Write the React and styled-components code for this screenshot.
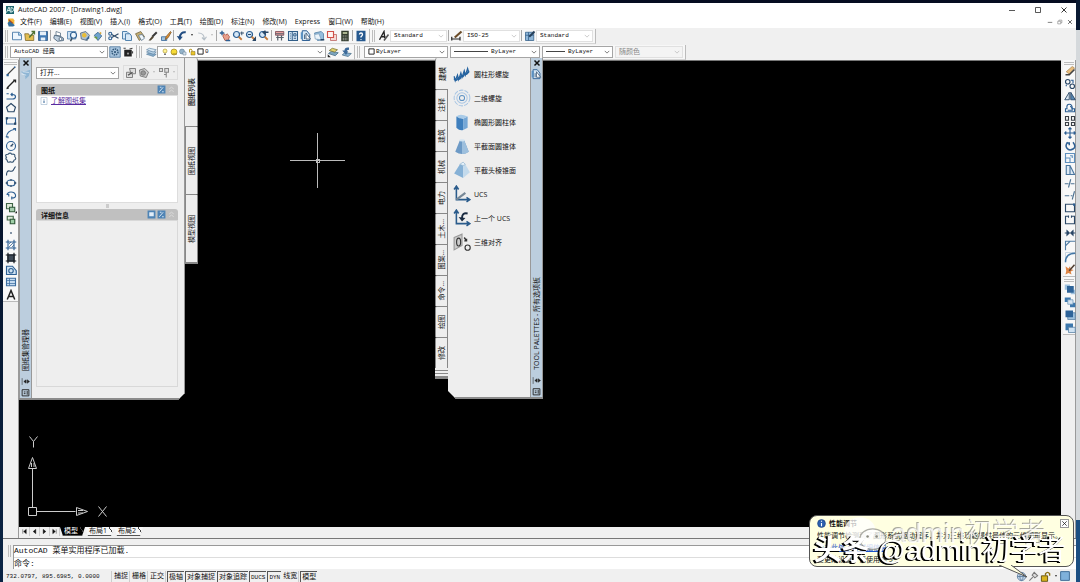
import React from "react";
import styled, { createGlobalStyle, css } from "styled-components";

const UI_FONT = `"Open Sans", "Noto Sans CJK SC", sans-serif`;
const MONO_FONT = `"Liberation Mono", "Noto Sans CJK SC", monospace`;

const GlobalStyle = createGlobalStyle`
  * {
    box-sizing: border-box;
  }

  body {
    margin: 0;
    background: #071527;
    font-family: ${UI_FONT};
    font-size: 7px;
    color: #111;
  }

  button, select, input {
    font: inherit;
    color: inherit;
    margin: 0;
    padding: 0;
    border: 0;
    border-radius: 0;
    background: none;
    outline: none;
  }
`;

const blue = "#2d5f93";
const navy = "#2a4766";
const line = { fill: "none", stroke: navy, strokeWidth: 1.5 };

const page = (
  <path d="M2 3h9l3 3v7H2z" fill="#eef6fd" stroke="#4a7ba8" strokeWidth="1.2" />
);
const zoomGlass = (
  <g>
    <circle cx="6" cy="6" r="4" fill="#d5e7f6" stroke={blue} strokeWidth="1.6" />
    <path d="M9 9l4 4" stroke="#c47a3c" strokeWidth="2.4" />
  </g>
);

// every drawing lives on a 16x16 grid
const glyphs = {
  app: (
    <g>
      <path d="M0 0h16v16H0z" fill="#1f6670" />
      <path d="M1 13L6 2l3 11M3 9h5M10 3v9h2q3-1 3-5t-5-4" fill="none" stroke="#dff3f2" strokeWidth="1.8" />
    </g>
  ),
  doc: (
    <g>
      <path d="M2 1h9l2 3v7H2z" fill="#f5b63a" />
      <path d="M1 9l4-4 9 8-3 2H3z" fill="#356f9c" />
      <path d="M3 3l7 6" stroke="#a33f24" strokeWidth="2" />
    </g>
  ),
  new: (
    <g>
      {page}
      <path d="M10 3v4h4" fill="#9fc6e6" stroke="#4a7ba8" />
    </g>
  ),
  open: (
    <g>
      <path d="M1 5h5l1 2h6v7H2z" fill="#e3bd50" stroke="#7c6425" />
      <path d="M7 10l7-8M10 2h4v4" fill="none" stroke="#4f7131" strokeWidth="1.7" />
    </g>
  ),
  save: (
    <g>
      <path d="M2 2h12v12H2z" fill="#3f79b4" stroke="#27527f" />
      <path d="M4 2h8v5H4zM5 10h6v4H5z" fill="#e6f0f9" />
    </g>
  ),
  print: (
    <g>
      <path d="M4 2l6 2v4L4 7z" fill="#fff" stroke="#536b80" />
      <path d="M2 7l9 2 3 2v3l-8 1-5-4z" fill="#bfd0df" stroke="#39536b" />
      <circle cx="10" cy="12" r="2" fill="#fff" stroke="#39536b" />
    </g>
  ),
  preview: (
    <g>
      <path d="M2 2h11v10H2z" fill="#cce1f3" stroke="#477aa7" />
      <circle cx="10" cy="7" r="4" fill="#edf6fc" stroke={blue} strokeWidth="1.5" />
      <path d="M8 11l-2 4" stroke="#3b4c5b" strokeWidth="2" />
    </g>
  ),
  publish: (
    <g>
      <path d="M2 4l7-2 5 5-3 7-8-2z" fill="#aebfce" stroke="#4a5d6e" />
      <circle cx="7" cy="7" r="3" fill="#e8bd37" />
      <path d="M8 14l5-6 1 3z" fill={blue} />
    </g>
  ),
  dwf: (
    <g>
      <path d="M3 7l5-4 5 5-5 6z" fill="#6ea3ce" stroke="#315e85" />
      <path d="M2 9h5v4z" fill="#6b9b44" />
      <path d="M10 2l3 2-2 2z" fill="#d7a333" />
    </g>
  ),
  cut: (
    <g {...line}>
      <path d="M5 6l9 5M5 10l9-5" />
      <circle cx="3" cy="5" r="2" stroke={blue} />
      <circle cx="3" cy="11" r="2" stroke={blue} />
    </g>
  ),
  copy: (
    <g fill="#d8e9f7" stroke="#4276a5" strokeWidth="1.2">
      <path d="M2 2h6l3 3v7H2z" />
      <path d="M6 5h6l2 3v6H6z" />
    </g>
  ),
  paste: (
    <g>
      <path d="M2 5l7-3 5 7-7 5z" fill="#c6ae72" stroke="#6f613f" />
      <path d="M6 7l5-1 3 5-4 3z" fill="#eff5fa" stroke="#536f88" />
    </g>
  ),
  brush: (
    <g>
      <path d="M13 3L7 9" stroke="#3a3a3a" strokeWidth="2.6" />
      <path d="M7 8l2 2-4 4H2z" fill="#504633" />
    </g>
  ),
  block: (
    <g>
      <path d="M2 9h7v5H2z" fill="#9fc3e1" stroke={blue} />
      <path d="M14 2L8 9l-1 4 4-3 4-7z" fill="#e6912d" stroke="#70512c" />
    </g>
  ),
  undo: (
    <g>
      <path d="M13 3Q6 2 5 10" fill="none" stroke="#204c81" strokeWidth="2.6" />
      <path d="M1 8l4 6 4-5z" fill="#204c81" />
    </g>
  ),
  redo: <path d="M3 4q8 0 8 8M8 10l3 3 3-4" fill="none" stroke="#b6bfc7" strokeWidth="1.6" />,
  pan: (
    <g>
      <path d="M5 8l2-3 2 2 2-2 3 4-2 5H8z" fill="#e9a18d" stroke="#a4493b" />
      <path d="M1 4h6M4 1v6M9 14h6" stroke={blue} strokeWidth="1.8" />
    </g>
  ),
  zoom: (
    <g>
      {zoomGlass}
      <path d="M11 4h5M13 2v5" stroke={navy} strokeWidth="1.2" />
    </g>
  ),
  zoomWindow: (
    <g>
      {zoomGlass}
      <path d="M4 6h4M14 14v-4l-3 4z" stroke={navy} strokeWidth="1.4" />
    </g>
  ),
  zoomPrev: (
    <g>
      {zoomGlass}
      <path d="M14 3H8M10 1L7 3l3 3" fill="none" stroke={navy} strokeWidth="2" />
    </g>
  ),
  properties: (
    <g>
      <path d="M2 2h11v5H2z" fill="#e8a0a0" stroke="#703f49" />
      <path d="M5 7v7M10 7v7M3 10h10M2 5h11" stroke="#58616b" strokeWidth="1.6" />
    </g>
  ),
  center: (
    <g>
      <path d="M2 2h12v12H2z" fill="#cfe2f2" stroke="#315e88" strokeWidth="1.4" />
      <path d="M7 2v12M4 5h1M4 8h1M4 11h1M9 5h3v3H9zM9 11h3" fill="none" stroke="#315e88" strokeWidth="1.3" />
    </g>
  ),
  palette: (
    <g>
      <path d="M3 1h6l4 5v8H3z" fill="#d6e7f5" stroke={blue} strokeWidth="1.3" />
      <path d="M1 3h3v9H1z" fill="#5b91c1" />
      <path d="M8 4v8h6zM6 6v6" fill="#fff" stroke={navy} />
    </g>
  ),
  sheets: (
    <g>
      <path d="M2 4l9-2 3 3v8l-8 1z" fill="#96bddc" stroke="#49789f" />
      <path d="M2 6l6-1 3 8-8-1z" fill="#eaf3fa" stroke="#7fa1bd" />
      <path d="M10 13h5" stroke={navy} strokeWidth="2" />
    </g>
  ),
  markup: (
    <g>
      <path d="M6 6h8v8H6z" fill="#f5d9d5" stroke="#b85e5a" />
      <path d="M2 2h8v8H2z" fill="#fff5f2" stroke="#d05048" strokeWidth="1.5" />
    </g>
  ),
  calc: (
    <g>
      <path d="M3 1h10v14H3z" fill="#333c2e" />
      <path d="M5 3h6v2H5z" fill="#d6dfb4" />
      <path d="M5 8h6M5 11h6M5 13h6" stroke="#d9d9d9" strokeDasharray="1.5 1" />
    </g>
  ),
  help: (
    <g>
      <path d="M2 1h12v14H2z" fill="#26598f" />
      <path d="M6 6q0-2 2-2t2 2q0 1-2 3v1M8 12v1" fill="none" stroke="#fff" strokeWidth="1.8" />
    </g>
  ),
  textStyle: (
    <g>
      <path d="M2 13L8 2l1 9M4 9h6" fill="none" stroke="#222" strokeWidth="1.8" />
      <path d="M8 14l6-8" stroke="#555" strokeWidth="2" />
    </g>
  ),
  dimStyle: (
    <g>
      <path d="M1 12h11M1 9v5M12 9v5" stroke="#222" strokeWidth="1.6" />
      <path d="M14 2L5 10" stroke="#6b4c28" strokeWidth="3" />
    </g>
  ),
  tableStyle: (
    <g>
      <path d="M2 3h11v11H2z" fill="#8fb6d8" stroke="#315e88" />
      <path d="M2 7h11M6 3v11" stroke="#315e88" />
      <path d="M14 2L7 9" stroke="#253e58" strokeWidth="2.4" />
    </g>
  ),
  gear: (
    <g>
      <path d="M1 1h14v14H1z" fill="#a9c5de" stroke="#436d94" />
      <circle cx="8" cy="8" r="4" fill="none" stroke="#345a7d" strokeWidth="2" strokeDasharray="2 1" />
      <circle cx="8" cy="8" r="1.5" fill="#345a7d" />
    </g>
  ),
  lock: (
    <g>
      <path d="M3 5h10v9H3z" fill="#222" />
      <circle cx="8" cy="10" r="1.5" fill="#999" />
      <path d="M2 3h3M10 4l4-1M14 7v3" stroke="#444" strokeWidth="1.6" />
    </g>
  ),
  layers: (
    <g stroke="#52799b" strokeWidth=".8">
      <path d="M2 11l4-2 9 2-4 3z" fill="#85abc9" />
      <path d="M2 8l4-2 9 2-4 3z" fill="#b9d3e7" />
      <path d="M2 5l4-2 9 2-4 3z" fill="#dceaf5" />
    </g>
  ),
  bulb: (
    <g>
      <circle cx="8" cy="6" r="4" fill="#fff397" stroke="#a58e23" strokeWidth="1.2" />
      <path d="M6 11h4v3H6z" fill="#777" />
    </g>
  ),
  sun: (
    <g>
      <circle cx="8" cy="8" r="6" fill="#f7dc36" stroke="#a58e23" strokeWidth="1.5" />
      <path d="M5 12h9" stroke="#9d842e" strokeWidth="2" />
    </g>
  ),
  freeze: (
    <g>
      <circle cx="6" cy="7" r="5" fill="#94b3ca" stroke="#54748b" />
      <path d="M8 8h6v6H8z" fill="#d6e4ee" stroke="#60798c" />
    </g>
  ),
  unlock: (
    <g>
      <path d="M6 7h8v7H6z" fill="#e9c52d" stroke="#81691c" />
      <path d="M8 7V4Q7 1 3 3v6" fill="none" stroke="#b89827" strokeWidth="2" />
    </g>
  ),
  swatch: <path d="M2 2h12v12H2z" fill="#fff" stroke="#111" strokeWidth="2" />,
  layerPrev: (
    <g>
      <path d="M2 10l4-3 9 2-4 4z" fill="#7ca4bd" stroke="#466c86" />
      <path d="M3 6l4-3 7 2-4 3z" fill="#e2d36f" stroke="#7a7230" />
      <path d="M1 11v4h4z" fill="#222" />
    </g>
  ),
  layerState: (
    <g>
      <path d="M3 12l3-3 9 1-4 4z" fill="#8cb3d3" stroke="#466c86" />
      <path d="M12 2Q6 1 6 6H3l5 6 3-5H9q0-2 3-2z" fill="#3b6999" />
    </g>
  ),
  lineTool: (
    <g>
      <path d="M3 13L13 3" stroke="#444" strokeWidth="1.5" />
      <path d="M2 12h3v3H2zM12 2h2v2h-2z" fill={blue} />
    </g>
  ),
  ray: <path d="M3 13L13 3M2 14l3-1M11 3h3v3" fill="none" stroke="#222" strokeWidth="1.8" />,
  pline: <path d="M2 5h3M2 12h8q4 0 4-3t-4-3H8M10 4L8 6l2 2" {...line} stroke={blue} />,
  polygon: <path d="M8 2l6 5-2 6H4L2 7z" {...line} />,
  rect: (
    <g>
      <path d="M2 4h12v8H2z" {...line} stroke={blue} />
      <path d="M1 3h3v3H1zM12 10h3v3h-3z" fill={navy} />
    </g>
  ),
  arc: <path d="M2 14Q2 5 13 3M1 13h3v2M11 2h3v3" {...line} stroke={blue} />,
  circle: (
    <g {...line} stroke={blue}>
      <circle cx="8" cy="8" r="6" />
      <path d="M8 8l3-3M7 8h3" stroke={navy} />
    </g>
  ),
  cloud: (
    <path d="M4 3q3-3 5 0 5-1 4 3 3 4-1 5-1 4-5 2-4 2-4-2-3-2-1-4-3-4 2-4z" {...line} stroke="#3c5975" />
  ),
  spline: <path d="M2 14q0-7 4-6t5-1 3-5" {...line} />,
  ellipse: (
    <g>
      <ellipse cx="8" cy="8" rx="5.5" ry="4" {...line} stroke={blue} />
      <path d="M7 3h2v2H7zM1 7h3v2H1zM12 7h3v2h-3zM7 11h2v2H7z" fill={navy} />
    </g>
  ),
  ellipseArc: <path d="M3 8q0-4 5-4t6 4-5 4M9 10v4M2 7h3v3" {...line} stroke={blue} />,
  insert: (
    <g>
      <path d="M2 2h8v7H2z" fill="#dfead9" stroke="#3e6445" strokeWidth="1.5" />
      <path d="M6 7h7v6H6z" fill="#a8ceb0" stroke="#2f5838" strokeWidth="1.4" />
      <path d="M13 15h3v-3z" fill="#222" />
    </g>
  ),
  makeBlock: (
    <g>
      <path d="M3 3h8v5H3z" fill="#dfead9" stroke="#3e6445" strokeWidth="1.5" />
      <path d="M7 7h6v6H7z" fill="#9fcfa7" stroke="#2f5838" strokeWidth="1.5" />
    </g>
  ),
  point: <path d="M7 7h2v2H7z" fill={navy} />,
  hatch: (
    <g {...line} stroke={blue}>
      <path d="M4 1v14M12 1v14M1 4h14M1 12h14" />
      <path d="M5 11l6-6M5 7l3-3M9 11l3-3" strokeWidth="1" />
    </g>
  ),
  gradient: (
    <g>
      <path d="M3 3h10v10H3z" fill="#3f4b58" />
      <path d="M4 1v14M12 1v14M1 4h14M1 12h14" stroke="#161b21" strokeWidth="1.6" />
    </g>
  ),
  region: (
    <g {...line} stroke={blue} fill="#cfe2f2">
      <path d="M2 3h8l5 6v5H2z" />
      <circle cx="8" cy="9" r="3" />
    </g>
  ),
  table: (
    <g>
      <path d="M2 3h12v10H2z" fill="#c5dbf0" stroke="#3c6da0" strokeWidth="1.5" />
      <path d="M2 6h12M2 10h12M6 3v10" stroke="#3c6da0" />
    </g>
  ),
  mtext: <path d="M3 14L8 2l5 12M5 10h6" fill="none" stroke="#222" strokeWidth="2" />,
  erase: (
    <g>
      <path d="M3 9l8-7 3 2-7 8z" fill="#e9bd7d" stroke="#a98650" />
      <path d="M2 13h5l7-7" fill="none" stroke="#444" strokeWidth="2" />
    </g>
  ),
  copyObj: (
    <g {...line}>
      <circle cx="5" cy="5" r="3" />
      <circle cx="11" cy="11" r="3" />
      <path d="M9 3h3v4M3 9v2" stroke={blue} />
    </g>
  ),
  mirror: (
    <g>
      <path d="M7 3v10H1z" fill="#dbe6f0" stroke={navy} strokeWidth="1.2" />
      <path d="M9 3v10h6z" fill="#5786b1" stroke={navy} strokeWidth="1.2" />
    </g>
  ),
  offset: (
    <g {...line} stroke={blue}>
      <path d="M2 13h12V9h-3q0-6-4-6T4 9H2z" />
      <path d="M5 11h6q0-5-3-5" />
    </g>
  ),
  array: <path d="M2 2h4v5H2zM10 2h4v5h-4zM2 10h4v4H2zM10 10h4v4h-4z" {...line} stroke="#3a3f46" />,
  move: <path d="M8 1v14M1 8h14M6 3l2-2 2 2M6 13l2 2 2-2M3 6L1 8l2 2M13 6l2 2-2 2" {...line} stroke={blue} />,
  rotate: <path d="M5 3Q1 7 4 11t8 1 0-9M3 4h4v3" {...line} stroke={blue} strokeWidth="2" />,
  scale: (
    <g {...line} stroke="#5f90bd">
      <path d="M2 2h12v12H2z" />
      <path d="M2 8h6v6H2zM8 5h3v3" />
    </g>
  ),
  stretch: <path d="M3 2v12h11L8 2zM8 2v12" {...line} fill="#dfeaf4" stroke="#49769f" />,
  trim: <path d="M1 9h5M9 9h5M9 3L6 14" {...line} stroke="#4c7292" />,
  extend: <path d="M1 9h6M9 9h2M14 3l-3 11" {...line} stroke="#4c7292" />,
  breakPoint: (
    <g>
      <path d="M2 3h12v10H2z" {...line} />
      <path d="M12 2h3v3h-3z" fill={blue} />
    </g>
  ),
  breakTool: <path d="M6 3H2v10h12V3h-4M6 2v3M10 2v3" {...line} />,
  join: <path d="M1 8h5M15 8h-5M4 5l3 3-3 3zM12 5L9 8l3 3z" {...line} fill={navy} />,
  chamfer: <path d="M2 15V9l6-6h7M2 9V3h6" {...line} stroke="#4f7ba3" />,
  fillet: (
    <g fill="none">
      <path d="M2 15V2h13" stroke="#b8c9d8" />
      <path d="M2 15Q2 3 15 3" stroke="#4276a5" strokeWidth="2" />
    </g>
  ),
  explode: (
    <g>
      <path d="M2 3l4 3 2-3 1 4 4 1-4 2 1 4-4-2-4 2 1-5z" fill="#df8545" />
      <path d="M14 1L7 9" stroke="#513f32" strokeWidth="2" />
    </g>
  ),
  orderFront: (
    <g>
      <path d="M1 2h7v7H1zM9 9h6v6H9z" fill="#9fc1dd" />
      <path d="M4 4h9v9H4z" fill="#2f6499" />
    </g>
  ),
  orderBack: (
    <g>
      <path d="M1 2h8v6H1zM8 9h7v6H8z" fill="#3d78ad" />
      <path d="M5 5h7v6H5z" fill="#d8e6f2" stroke="#6c95b8" />
    </g>
  ),
  orderAbove: (
    <g>
      <path d="M5 5h10v9H5z" fill="#9fc1dd" stroke="#567fa3" />
      <path d="M2 2h10v9H2z" fill="#2f6499" />
    </g>
  ),
  orderUnder: (
    <g>
      <path d="M2 2h10v9H2z" fill="#3d78ad" />
      <path d="M6 7h9v7H6z" fill="#cfe2f2" stroke="#567fa3" />
    </g>
  ),
  helix: (
    <g fill="none" stroke="#2563a0" strokeWidth="1.1">
      <path d="M1 10l1 4 2-5 1 4 2-6 1 4 2-6 1 4 2-6 1 4" />
      <path d="M1 12q2 3 3 0M4 11q2 3 3-1M7 9q2 3 3-1M10 7q2 3 4-2" strokeWidth="1.6" />
    </g>
  ),
  spiral: (
    <g fill="none" stroke="#a9c6e4" strokeWidth=".9">
      <circle cx="8" cy="8" r="7" strokeDasharray="4 1" />
      <circle cx="8" cy="8" r="4.6" />
      <circle cx="8" cy="8" r="2.3" stroke="#5f93c5" />
    </g>
  ),
  cylinder: (
    <g>
      <path d="M3 3v10q3 3 6 2V5z" fill="#3f7fbd" />
      <path d="M9 5v10l4-2V3z" fill="#75a7d6" />
      <path d="M3 3q3-3 10 0l-4 2q-4 0-6-2z" fill="#a9cbe8" />
    </g>
  ),
  cone: (
    <g>
      <path d="M6 3L2 13q6 4 12 0L10 3z" fill="#6d9ac6" />
      <path d="M8 3v12q4 0 6-2L10 3z" fill="#9dbfdd" />
      <ellipse cx="8" cy="3" rx="2.5" ry="1" fill="#d2e4f2" />
    </g>
  ),
  pyramid: (
    <g>
      <path d="M6 3L1 11l8 4V4z" fill="#86b1d6" />
      <path d="M9 4v11l6-5-4-7z" fill="#c3daec" />
      <path d="M6 3l3-2 2 2-2 1z" fill="#e8f3fb" stroke="#7ba5c8" strokeWidth=".5" />
    </g>
  ),
  ucs: (
    <g fill="none" stroke="#2b5c8c" strokeWidth="1.4">
      <path d="M3 1v12h12M1 4l2-3 2 3M12 11l3 2-3 2" />
      <path d="M3 13l8-6" stroke="#778897" strokeWidth="2" />
    </g>
  ),
  ucsPrev: (
    <g>
      <path d="M3 1v12h12M1 4l2-3 2 3M12 11l3 2-3 2" fill="none" stroke="#2b5c8c" strokeWidth="1.4" />
      <path d="M13 4Q8 3 8 8" fill="none" stroke="#182940" strokeWidth="1.7" />
      <path d="M5 7l3 4 3-3z" fill="#182940" />
    </g>
  ),
  align3d: (
    <g fill="none" stroke="#333">
      <path d="M1 4l7-3v10l-7 4z" fill="#ccc" stroke="#999" />
      <ellipse cx="5" cy="8" rx="1.800" ry="3.500" />
      <circle cx="13" cy="13" r="2.3" />
      <path d="M10 4l2 3M10 7h2V5" strokeWidth="1.300" />
    </g>
  ),
  wing: (
    <g>
      <path d="M1 4q8 0 14-3l-2 9q-4 3-5 5 0-8-7-11z" fill="#8eb5d4" />
      <path d="M2 7l7 2M4 4l9 1" stroke="#eaf3fa" />
    </g>
  ),
  autoHide: <path d="M2 2v12M9 5L5 8l4 3zM11 5l4 3-4 3z" fill="#222" stroke="#222" />,
  menuBox: (
    <g fill="none" stroke="#222" strokeWidth="1.6">
      <path d="M2 3h12v11H2z" />
      <path d="M5 7h3M5 10h3M11 5v7" />
    </g>
  ),
  close: <path d="M3 3l10 10M13 3L3 13" stroke="#111" strokeWidth="3" />,
  boxIcon: (
    <g>
      <path d="M1 1h14v14H1z" fill="#4f84b5" />
      <path d="M4 4h8v7H4z" fill="#e3eef8" />
    </g>
  ),
  boxCheck: (
    <g>
      <path d="M1 1h14v14H1z" fill="#4f84b5" />
      <path d="M4 12l7-8M5 4h3M9 12h3" stroke="#e3eef8" strokeWidth="1.6" />
    </g>
  ),
  chevrons: <path d="M4 7l4-3 4 3M4 12l4-3 4 3" fill="none" stroke="#dcdcdc" strokeWidth="1.6" />,
  infoPage: (
    <g>
      <path d="M2 1h12v14H2z" fill="#fff" stroke="#8aa7c0" />
      <path d="M8 4v1M8 7v5" stroke={blue} strokeWidth="2" />
    </g>
  ),
  info: (
    <g>
      <circle cx="8" cy="8" r="7" fill="#2b5fb0" stroke="#173b78" />
      <path d="M8 3v2M8 7v6" stroke="#fff" strokeWidth="2" />
    </g>
  ),
  sheetGray: (
    <g fill="#ddd" stroke="#777" strokeWidth="1.2">
      <path d="M2 7h8v7H2z" />
      <path d="M6 2h8v7H8z" />
      <path d="M4 11l6-4" stroke="#555" strokeWidth="2" />
    </g>
  ),
  publishGray: (
    <g fill="#ccc" stroke="#777" strokeWidth="1.2">
      <path d="M2 4l7-2 5 5-3 7-8-2z" />
      <circle cx="7" cy="8" r="3" fill="#999" />
    </g>
  ),
  treeGray: <path d="M2 2h4v4H2zM9 2h5v5H9zM11 7v7M8 10h3" fill="#ddd" stroke="#888" strokeWidth="1.4" />,
  min: <path d="M2 9h12" stroke="#222" strokeWidth="1.5" />,
  max: <path d="M3 3h10v10H3z" fill="none" stroke="#222" strokeWidth="1.5" />,
  restore: <path d="M2 6h8v7H2zM5 6V3h8v7h-3" fill="none" stroke="#777" strokeWidth="1.5" />,
  quit: <path d="M3 3l10 10M13 3L3 13" stroke="#222" strokeWidth="1.8" />,
  globe: (
    <g fill="#c7d8ea" stroke="#56799b" strokeWidth="1.2">
      <circle cx="8" cy="8" r="6" />
      <path d="M2 8h12M8 2q-5 6 0 12M8 2q5 6 0 12" fill="none" />
    </g>
  ),
  plug: <path d="M2 14l5-5M6 6l4 4 4-3-5-5z" fill="#ddd" stroke="#777" strokeWidth="1.5" />,
  goldLock: (
    <g>
      <path d="M2 7h9v8H2z" fill="#d8b31e" stroke="#5f4c0b" strokeWidth="1.3" />
      <path d="M8 7V4q3-4 6 0v3" fill="none" stroke="#8b7015" strokeWidth="2" />
    </g>
  ),
  tray: <path d="M1 1h14v14H1z" fill="#7fb1db" stroke="#426f98" strokeWidth="1.6" />,
};

const Glyph = styled.svg`
  display: block;
  flex: none;
  width: ${(p) => p.$size || 12}px;
  height: ${(p) => p.$size || 12}px;
`;

const Icon = ({ name, size }) => (
  <Glyph viewBox="0 0 16 16" $size={size} aria-hidden="true">
    {glyphs[name]}
  </Glyph>
);

const Desktop = styled.div`
  min-height: 100vh;
  display: flex;
  padding: 3px 4px 0 3px;
  background: linear-gradient(#0a1a33 30px, #d5d9dc 30px, #d5d9dc 520px, #1c4f82 520px) right / 4px 100% no-repeat,
    linear-gradient(#050c20, #0a2444);
`;

const Window = styled.div`
  flex: 1;
  min-width: 0;
  display: flex;
  flex-direction: column;
  background: #f0f0f0;
`;

const TitleBar = styled.header`
  display: flex;
  align-items: center;
  gap: 4px;
  height: 13px;
  padding: 0 8px 0 3px;
  background: #fff;
`;

const Title = styled.h1`
  flex: 1;
  margin: 0;
  font-size: 7px;
  font-weight: 400;
`;

const WindowControls = styled.div`
  display: flex;
  gap: ${(p) => (p.$small ? 4 : 18)}px;
`;

const PlainButton = styled.button`
  display: grid;
  place-items: center;
`;

const MenuBar = styled.nav`
  display: flex;
  align-items: center;
  height: 12px;
  padding: 0 3px 0 4px;
  background: #fff;
`;

const MenuList = styled.div`
  flex: 1;
  display: flex;
  gap: 8px;
  margin-left: 4px;
`;

const MenuItem = styled.button`
  line-height: 10px;
  white-space: nowrap;
`;

const ToolbarRow = styled.div`
  display: flex;
  align-items: center;
  height: 16px;
`;

const Toolbar = styled.div`
  display: flex;
  align-items: center;
  height: 15px;
  padding: 0 2px;
  gap: ${(p) => p.$gap || 0}px;
  background: #f7f7f7;
  border-right: 1px solid #bbb;
  border-bottom: 1px solid #d5d5d5;
`;

const ToolButton = styled.button`
  display: grid;
  place-items: center;
  width: 13px;
  height: 13px;
`;

const DropButton = styled.button`
  display: grid;
  place-items: center;
  width: 7px;
  height: 12px;

  &::before {
    content: "";
    border: 1px solid transparent;
    border-top: 2px solid ${(p) => (p.$dim ? "#bbb" : "#333")};
  }
`;

const Separator = styled.span`
  width: 1px;
  height: 11px;
  margin: 0 1px;
  background: #a8a8a8;
`;

const Grip = styled.span`
  flex: none;
  border: 0 solid #bdbdbd;
  ${(p) =>
    p.$across
      ? css`
          height: 3px;
          margin: 0 1px;
          border-width: 1px 0;
        `
      : css`
          width: 3px;
          height: 12px;
          margin-right: 2px;
          border-width: 0 1px;
        `}
`;

const ComboFrame = styled.label`
  display: flex;
  align-items: center;
  gap: 1px;
  width: ${(p) => p.$width}px;
  height: 12px;
  padding: 0 2px 0 3px;
  background: ${(p) => (p.$dim ? "#f4f4f4" : "#fff")};
  border: 1px solid ${(p) => (p.$soft ? "#e0e0e0" : "#a5a5a5")};
  color: ${(p) => (p.$dim ? "#888" : "#111")};
  font-family: ${(p) => (p.$ui ? UI_FONT : MONO_FONT)};
  font-size: ${(p) => (p.$ui ? 7 : 6)}px;

  select {
    flex: 1;
    min-width: 0;
    height: 10px;
    appearance: none;
    opacity: 1;
  }
`;

const LineSample = styled.span`
  width: ${(p) => p.$width}px;
  height: 1px;
  margin-right: 2px;
  background: #444;
`;

const Combo = ({ label, value, children, ...rest }) => (
  <ComboFrame {...rest}>
    {children}
    <select aria-label={label} disabled={rest.$dim}>
      <option>{value}</option>
    </select>
    <Glyph viewBox="0 0 16 16" $size={6} aria-hidden="true">
      <path d="M2 5l6 6 6-6" fill="none" stroke={rest.$soft ? "#bbb" : "#555"} strokeWidth="2" />
    </Glyph>
  </ComboFrame>
);

const Workspace = styled.main`
  flex: 1;
  display: flex;
`;

const SideBar = styled.aside`
  width: ${(p) => (p.$right ? 15 : 16)}px;
  flex: none;
  padding-left: ${(p) => (p.$right ? 2 : 0)}px;
  border-right: 1px solid #9a9a9a;
`;

const SideTools = styled.div`
  display: flex;
  flex-direction: column;
  padding-top: 2px;
  background: #f8f8f8;
  border-bottom: 1px solid #bbb;
`;

const ToolColumn = styled.div`
  display: grid;
  grid-template-rows: repeat(${(p) => p.$rows}, 1fr);
  height: ${(p) => p.$height}px;
  justify-items: center;
  align-items: center;

  button {
    height: 12px;
  }
`;

const DrawingArea = styled.section`
  flex: 1;
  min-width: 0;
  display: flex;
  flex-direction: column;
`;

const Canvas = styled.div`
  position: relative;
  flex: 1;
  background: #000;
  border-top: 1px solid #777;
`;

const Crosshair = styled.svg`
  position: absolute;
  left: 271px;
  top: 72px;
  width: 55px;
  height: 55px;
`;

const UcsMark = styled.svg`
  position: absolute;
  left: 6px;
  bottom: 5px;
  width: 84px;
  height: 86px;
`;

const FloatingWindow = styled.div`
  position: absolute;
  top: -3px;
  left: ${(p) => p.$left}px;
  display: flex;
  align-items: flex-start;
`;

const PanelBody = styled.div`
  display: flex;
  height: ${(p) => p.$height}px;
  background: #eee;
  border-bottom: 2px solid #8b8b8b;
  clip-path: ${(p) =>
    p.$cut === "right"
      ? "polygon(0 0, 100% 0, 100% calc(100% - 7px), calc(100% - 7px) 100%, 0 100%)"
      : "polygon(0 0, 100% 0, 100% 100%, 8px 100%, 0 calc(100% - 8px))"};
`;

const CaptionBar = styled.div`
  display: flex;
  flex-direction: column;
  align-items: center;
  gap: 2px;
  width: 13px;
  padding: 1px 0 1px;
  background: #bccede;
  border: 0 solid #999;
  border-width: 0 1px;
`;

const SidewaysText = styled.span`
  writing-mode: vertical-rl;
  text-orientation: sideways;
  transform: rotate(180deg);
  line-height: 9px;
  white-space: nowrap;
`;

const CaptionTitle = styled(SidewaysText)`
  margin-top: auto;
  margin-bottom: 4px;
`;

const SheetContent = styled.div`
  display: flex;
  flex-direction: column;
  width: 153px;
  padding: 7px 6px 11px 4px;
  border-right: 1px solid #999;
`;

const SheetTools = styled.div`
  display: flex;
  align-items: center;
  gap: 4px;
  margin-bottom: 4px;
`;

const SheetButtons = styled.div`
  display: flex;
  flex: 1;
  border: 1px solid #ddd;
`;

const SectionHeader = styled.h2`
  display: flex;
  align-items: center;
  gap: 1px;
  height: 11px;
  margin: 0;
  padding: 0 2px 0 5px;
  background: #c0c0c0;
  border-radius: 3px 3px 0 0;
  font-size: 7px;
  font-weight: 700;

  span {
    flex: 1;
  }
`;

const SheetList = styled.div`
  height: 108px;
  padding: 0 3px;
  background: #fff;
  border: 1px solid #ddd;
`;

const SheetLink = styled.a`
  display: flex;
  align-items: center;
  gap: 3px;
  line-height: 9px;
  color: #5a2ca0;
`;

const Splitter = styled.div`
  width: 3px;
  height: 4px;
  margin: 1px auto;
  background: #ccc;
`;

const DetailBox = styled.div`
  flex: 1;
  border: 1px solid #d8d8d8;
`;

const TabStrip = styled.div`
  display: flex;
  flex-direction: column;
  width: 13px;
  border-bottom: 2px solid #888;
`;

const SideTab = styled.button`
  display: grid;
  place-items: center;
  width: 13px;
  height: ${(p) => p.$height}px;
  font-weight: ${(p) => (p.$active ? 500 : 400)};
  background: #eee;
  border: 0 solid #888;
  border-top-width: ${(p) => (p.$first ? 0 : 1)}px;
  border-left-width: ${(p) => (p.$side === "right" && p.$active ? 0 : 1)}px;
  border-right-width: ${(p) => (p.$side === "left" && p.$active ? 0 : 1)}px;
  border-radius: ${(p) => (p.$side === "right" ? "0 2px 0 0" : "2px 0 0 0")};
`;

const TabStack = styled.div`
  height: 9px;
  background: repeating-linear-gradient(#eee 0 2px, #888 2px 3px);
`;

const ToolList = styled.ul`
  width: 82px;
  margin: 0;
  padding: 4px 0 0 5px;
  list-style: none;
`;

const ToolEntry = styled.button`
  display: flex;
  align-items: center;
  gap: 3px;
  height: 24px;
  white-space: nowrap;
`;

const LayoutTabs = styled.div`
  display: flex;
  align-items: flex-start;
  height: 11px;
  padding-left: 1px;
`;

const NavButton = styled.button`
  display: grid;
  place-items: center;
  width: 10px;
  height: 9px;
  border-right: 1px solid #ccc;
`;

const LayoutTab = styled.button`
  display: flex;
  gap: 2px;
  height: 9px;
  padding-left: 4px;
  line-height: 8px;
  color: ${(p) => (p.$active ? "#fff" : "#111")};
  background: ${(p) => (p.$active ? "#000" : "#f8f8f8")};
  border-bottom: 1px solid #555;
  clip-path: polygon(0 0, 100% 0, calc(100% - 3px) 100%, 3px 100%);

  &::after {
    content: "";
    width: 5px;
    background: linear-gradient(to bottom right, transparent 46%, #444 46% 56%, transparent 56%);
    transform: scaleX(-1);
  }
`;

const CommandArea = styled.section`
  display: flex;
  height: 32px;
  padding: 6px 0 1px 5px;
  border-top: 1px solid #777;
`;

const CommandLines = styled.div`
  flex: 1;
  background: #fff;
  border: 1px solid #999;
  border-width: 1px 0 0 1px;
  font-family: ${MONO_FONT};
  font-size: 8px;
`;

const CommandHistory = styled.p`
  margin: 0;
  height: 12px;
  line-height: 9px;
  border-bottom: 1px solid #ddd;
`;

const CommandPrompt = styled.label`
  display: flex;
  line-height: 11px;

  input {
    flex: 1;
    height: 10px;
  }
`;

const StatusBar = styled.footer`
  display: flex;
  align-items: center;
  gap: 1px;
  height: 12px;
  padding: 0 6px 0 3px;
`;

const Coordinates = styled.output`
  width: 106px;
  height: 11px;
  line-height: 12px;
  font-family: ${MONO_FONT};
  font-size: 6px;
  white-space: pre;
  border-right: 1px solid #ccc;
`;

const StatusToggle = styled.button`
  height: 11px;
  padding: 0 1px;
  line-height: 11px;
  white-space: nowrap;
  font-family: ${MONO_FONT};
  font-size: ${(p) => (p.$latin ? 6 : 7)}px;
  border: 0 solid #555;
  border-width: ${(p) => (p.$on ? "1px 0 0 1px" : "0 1px 0 0")};
  border-color: ${(p) => (p.$on ? "#555" : "#ccc")};
`;

const Tray = styled.div`
  display: flex;
  align-items: center;
  gap: 1px;
  margin-left: auto;
`;

const Balloon = styled.div`
  position: fixed;
  right: 6px;
  bottom: 15px;
  width: 265px;
  height: 52px;
  padding: 1px 4px 0 7px;
  background: #ffffe1;
  border: 1px solid #555;
  border-radius: 8px;
  line-height: 12px;

  p {
    margin: 0;
    white-space: nowrap;
    overflow: hidden;
  }

  a {
    color: #1a50c8;
  }
`;

const BalloonTitle = styled.div`
  display: flex;
  align-items: center;
  gap: 3px;
  height: 13px;
  font-weight: 700;

  span {
    flex: 1;
  }
`;

const BalloonClose = styled(PlainButton)`
  width: 9px;
  height: 9px;
  background: #fff;
  border: 1px solid #999;
`;

const BalloonTail = styled.svg`
  position: absolute;
  right: 44px;
  top: 49px;
  width: 30px;
  height: 14px;
`;

const Watermark = styled.div`
  position: fixed;
  right: 14px;
  bottom: 13px;
  font-family: "Liberation Sans", "Noto Sans CJK SC", sans-serif;
  font-size: 28px;
  line-height: 36px;
  white-space: nowrap;
  color: #fff;
  text-shadow: -1px 1px 0 #000, -2px 1px 0 #000;
  pointer-events: none;

  b {
    font-weight: 700;
  }
`;

const GhostMark = styled.div`
  position: fixed;
  right: 34px;
  bottom: 30px;
  display: flex;
  align-items: center;
  gap: 3px;
  font-family: "Liberation Sans", "Noto Sans CJK SC", sans-serif;
  font-size: 27px;
  font-weight: 300;
  line-height: 36px;
  white-space: nowrap;
  color: rgba(255, 255, 255, 0.8);
  text-shadow: -1px -1px 0 rgba(110, 110, 110, 0.6);
  pointer-events: none;
`;

const menus = [
  "文件(F)", "编辑(E)", "视图(V)", "插入(I)", "格式(O)", "工具(T)",
  "绘图(D)", "标注(N)", "修改(M)", "Express", "窗口(W)", "帮助(H)",
];

const standardGroups = [
  ["new", "open", "save"],
  ["print", "preview", "publish", "dwf"],
  ["cut", "copy", "paste", "brush", "block"],
  ["undo", "drop", "redo", "dropDim"],
  ["pan", "zoom", "zoomWindow", "zoomPrev"],
  ["properties", "center", "palette", "sheets", "markup", "calc"],
  ["help"],
];

const drawTools = [
  "lineTool", "ray", "pline", "polygon", "rect", "arc", "circle", "cloud", "spline", "ellipse",
  "ellipseArc", "insert", "makeBlock", "point", "hatch", "gradient", "region", "table", "mtext",
];

const modifyTools = [
  "erase", "copyObj", "mirror", "offset", "array", "move", "rotate", "scale", "stretch",
  "trim", "extend", "breakPoint", "breakTool", "join", "chamfer", "fillet", "explode",
];

const orderTools = ["orderFront", "orderBack", "orderAbove", "orderUnder"];

const paletteTabs = ["建模", "注释", "建筑", "机械", "电力", "土木...", "图案...", "命令...", "绘图", "修改"];

const paletteTools = [
  ["helix", "圆柱形螺旋"],
  ["spiral", "二维螺旋"],
  ["cylinder", "椭圆形圆柱体"],
  ["cone", "平截面圆锥体"],
  ["pyramid", "平截头棱锥面"],
  ["ucs", "UCS"],
  ["ucsPrev", "上一个 UCS"],
  ["align3d", "三维对齐"],
];

const toggles = [
  ["捕捉", false], ["栅格", false], ["正交", false], ["极轴", true], ["对象捕捉", true],
  ["对象追踪", true], ["DUCS", true], ["DYN", true], ["线宽", false], ["模型", true],
];

const Tool = ({ name }) => {
  if (name.startsWith("drop")) {
    return <DropButton aria-label={name} $dim={name === "dropDim"} />;
  }
  return (
    <ToolButton aria-label={name}>
      <Icon name={name} />
    </ToolButton>
  );
};

const ToolStack = ({ tools, height }) => (
  <ToolColumn $rows={tools.length} $height={height}>
    {tools.map((name) => (
      <Tool key={name} name={name} />
    ))}
  </ToolColumn>
);

const SheetSetManager = () => (
  <FloatingWindow $left={0}>
    <PanelBody $height={342} $cut="right">
      <CaptionBar>
        <PlainButton aria-label="关闭">
          <Icon name="close" size={8} />
        </PlainButton>
        <Icon name="wing" size={11} />
        <CaptionTitle>图纸集管理器</CaptionTitle>
        <Icon name="autoHide" size={9} />
        <Icon name="menuBox" size={9} />
      </CaptionBar>
      <SheetContent>
        <SheetTools>
          <Combo label="图纸集" value="打开..." $width={84} $ui />
          <SheetButtons>
            <Tool name="sheetGray" />
            <Tool name="publishGray" />
            <Tool name="dropDim" />
            <Tool name="treeGray" />
            <Tool name="dropDim" />
          </SheetButtons>
        </SheetTools>
        <SectionHeader>
          <span>图纸</span>
          <Icon name="boxCheck" size={9} />
          <Icon name="chevrons" size={9} />
        </SectionHeader>
        <SheetList>
          <SheetLink href="#sheets">
            <Icon name="infoPage" size={8} />
            了解图纸集
          </SheetLink>
        </SheetList>
        <Splitter />
        <SectionHeader>
          <span>详细信息</span>
          <Icon name="boxIcon" size={9} />
          <Icon name="boxCheck" size={9} />
          <Icon name="chevrons" size={9} />
        </SectionHeader>
        <DetailBox />
      </SheetContent>
    </PanelBody>
    <TabStrip>
      {["图纸列表", "图纸视图", "模型视图"].map((tab, i) => (
        <SideTab key={tab} $side="right" $height={68} $first={i === 0} $active={i === 0}>
          <SidewaysText>{tab}</SidewaysText>
        </SideTab>
      ))}
    </TabStrip>
  </FloatingWindow>
);

const ToolPalettes = () => (
  <FloatingWindow $left={416}>
    <TabStrip>
      {paletteTabs.map((tab, i) => (
        <SideTab key={tab} $side="left" $height={31} $first={i === 0} $active={i === 0}>
          <SidewaysText>{tab}</SidewaysText>
        </SideTab>
      ))}
      <TabStack />
    </TabStrip>
    <PanelBody $height={341} $cut="left">
      <ToolList>
        {paletteTools.map(([icon, name]) => (
          <li key={name}>
            <ToolEntry>
              <Icon name={icon} size={18} />
              {name}
            </ToolEntry>
          </li>
        ))}
      </ToolList>
      <CaptionBar>
        <PlainButton aria-label="关闭">
          <Icon name="close" size={8} />
        </PlainButton>
        <Icon name="palette" size={11} />
        <CaptionTitle>TOOL PALETTES - 所有选项板</CaptionTitle>
        <Icon name="autoHide" size={9} />
        <Icon name="menuBox" size={9} />
      </CaptionBar>
    </PanelBody>
  </FloatingWindow>
);

const App = () => {
  return (
    <Desktop>
      <GlobalStyle />
      <Window>
        <TitleBar>
          <Icon name="app" size={8} />
          <Title>AutoCAD 2007 - [Drawing1.dwg]</Title>
          <WindowControls>
            <PlainButton aria-label="最小化"><Icon name="min" size={8} /></PlainButton>
            <PlainButton aria-label="最大化"><Icon name="max" size={8} /></PlainButton>
            <PlainButton aria-label="关闭"><Icon name="quit" size={8} /></PlainButton>
          </WindowControls>
        </TitleBar>
        <MenuBar>
          <Icon name="doc" size={9} />
          <MenuList>
            {menus.map((menu) => (
              <MenuItem key={menu}>{menu}</MenuItem>
            ))}
          </MenuList>
          <WindowControls $small>
            <PlainButton aria-label="最小化图形"><Icon name="min" size={6} /></PlainButton>
            <PlainButton aria-label="还原图形"><Icon name="restore" size={6} /></PlainButton>
            <PlainButton aria-label="关闭图形"><Icon name="quit" size={6} /></PlainButton>
          </WindowControls>
        </MenuBar>

        <ToolbarRow>
          <Toolbar>
            <Grip />
            {standardGroups.map((group, i) => (
              <React.Fragment key={group[0]}>
                {i > 0 && <Separator />}
                {group.map((name) => (
                  <Tool key={name} name={name} />
                ))}
              </React.Fragment>
            ))}
          </Toolbar>
          <Toolbar>
            <Grip />
            <Tool name="textStyle" />
            <Combo label="文字样式" value="Standard" $width={57} $soft />
            <Separator />
            <Tool name="dimStyle" />
            <Combo label="标注样式" value="ISO-25" $width={57} $soft />
            <Separator />
            <Tool name="tableStyle" />
            <Combo label="表格样式" value="Standard" $width={57} $soft />
          </Toolbar>
        </ToolbarRow>
        <ToolbarRow>
          <Toolbar>
            <Grip />
            <Combo label="工作空间" value="AutoCAD 经典" $width={98} />
            <Tool name="gear" />
            <Tool name="lock" />
          </Toolbar>
          <Toolbar>
            <Grip />
            <Tool name="layers" />
            <Combo label="图层" value="0" $width={169}>
              <Icon name="bulb" size={8} />
              <Icon name="sun" size={8} />
              <Icon name="freeze" size={8} />
              <Icon name="unlock" size={8} />
              <Icon name="swatch" size={7} />
            </Combo>
            <Tool name="layerPrev" />
            <Tool name="layerState" />
          </Toolbar>
          <Toolbar $gap={2}>
            <Grip />
            <Combo label="颜色" value="ByLayer" $width={84}>
              <Icon name="swatch" size={7} />
            </Combo>
            <Combo label="线型" value="ByLayer" $width={90}>
              <LineSample $width={34} />
            </Combo>
            <Combo label="线宽" value="ByLayer" $width={71}>
              <LineSample $width={19} />
            </Combo>
            <Combo label="打印样式" value="随颜色" $width={68} $dim $soft $ui />
          </Toolbar>
        </ToolbarRow>

        <Workspace>
          <SideBar>
            <SideTools>
              <Grip $across />
              <ToolStack tools={drawTools} height={236} />
            </SideTools>
          </SideBar>
          <DrawingArea>
            <Canvas>
              <Crosshair viewBox="0 0 55 55" stroke="#bbb" fill="none" shapeRendering="crispEdges">
                <path d="M0 27.5h55M27.5 0v55M26 26h3v3h-3z" />
              </Crosshair>
              <UcsMark viewBox="0 0 84 86" stroke="#ccc" fill="none">
                <path d="M4.5 0.5l4 5 4-5M8.5 5.5v6M3.5 71.500h8v8h-8zM7.5 71.5v-39M11.5 75.5h39" />
                <path d="M7.5 21.5l-4 11h8zM6.5 31v-4M9 31v-4M51.5 71.5v8l11-4zM53 74.5h5M53 77h5" />
                <path d="M73.5 70.5l8 10M81.5 70.5l-8 10" />
              </UcsMark>
              <SheetSetManager />
              <ToolPalettes />
            </Canvas>
            <LayoutTabs>
              {["M4 3v10M12 3v10L6 8z", "M11 3v10L5 8z", "M5 3v10l6-5z", "M12 3v10M4 3v10l6-5z"].map((d) => (
                <NavButton key={d} aria-label="布局导航">
                  <Glyph viewBox="0 0 16 16" $size={7}>
                    <path d={d} fill="#111" stroke="#111" />
                  </Glyph>
                </NavButton>
              ))}
              <LayoutTab $active>模型</LayoutTab>
              <LayoutTab>布局1</LayoutTab>
              <LayoutTab>布局2</LayoutTab>
            </LayoutTabs>
          </DrawingArea>
          <SideBar $right>
            <SideTools>
              <Grip $across />
              <ToolStack tools={modifyTools} height={211} />
            </SideTools>
            <SideTools>
              <Grip $across />
              <ToolStack tools={orderTools} height={52} />
            </SideTools>
          </SideBar>
        </Workspace>

        <CommandArea>
          <Grip />
          <CommandLines>
            <CommandHistory>AutoCAD 菜单实用程序已加载.</CommandHistory>
            <CommandPrompt>
              命令:
              <input type="text" />
            </CommandPrompt>
          </CommandLines>
        </CommandArea>
        <StatusBar>
          <Coordinates>{"732.0797, 895.6985, 0.0000"}</Coordinates>
          {toggles.map(([name, on]) => (
            <StatusToggle key={name} $on={on} $latin={name[0] === "D"} aria-pressed={on}>
              {name}
            </StatusToggle>
          ))}
          <Tray>
            <Icon name="globe" size={11} />
            <Icon name="plug" size={11} />
            <Icon name="goldLock" size={11} />
            <DropButton aria-label="状态栏菜单" />
            <Icon name="tray" size={10} />
          </Tray>
        </StatusBar>
      </Window>

      <Balloon role="status">
        <BalloonTitle>
          <Icon name="info" size={9} />
          <span>性能调节</span>
          <BalloonClose aria-label="关闭提示">
            <Icon name="quit" size={7} />
          </BalloonClose>
        </BalloonTitle>
        <p>性能调节检测到了图形系统驱动程序，并为三维功能提供最佳的三维图形显示。</p>
        <p>
          <a href="#details">单击此处了解详细信息</a>
        </p>
        <p>要更改设置，请使用命令</p>
        <BalloonTail viewBox="0 0 30 14">
          <path d="M0 0l28 12L12 0" fill="#ffffe1" stroke="#555" />
        </BalloonTail>
      </Balloon>
      <GhostMark>
        <svg width="46" height="36" viewBox="0 0 34 28" fill="rgba(255,255,255,.75)">
          <ellipse cx="13" cy="11" rx="12" ry="10" />
          <ellipse cx="23" cy="18" rx="10" ry="8" stroke="rgba(120,120,110,.6)" />
          <circle cx="19" cy="16" r="1" fill="#8a8a80" />
          <circle cx="26" cy="16" r="1" fill="#8a8a80" />
        </svg>
        admin初学者
      </GhostMark>
      <Watermark>
        <b>头条</b> @admin初学者
      </Watermark>
    </Desktop>
  );
};

export default App;
